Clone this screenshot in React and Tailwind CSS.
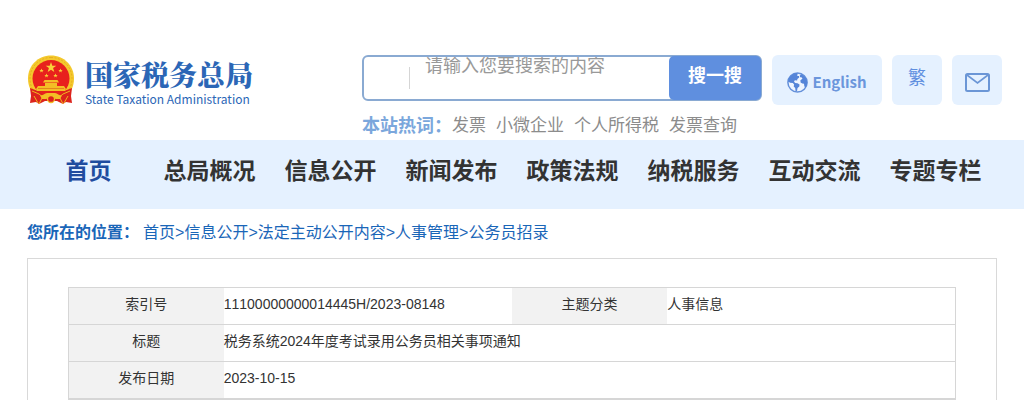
const navItems = [
  "首页",
  "总局概况",
  "信息公开",
  "新闻发布",
  "政策法规",
  "纳税服务",
  "互动交流",
  "专题专栏",
];

const hotWords = ["发票", "小微企业", "个人所得税", "发票查询"];

const crumbs = ["首页", "信息公开", "法定主动公开内容", "人事管理", "公务员招录"];

const Emblem = () => (
  <svg className="w-12 h-[50px]" viewBox="0 0 48 50" aria-hidden="true">
    {/* wheat ring */}
    <path
      d="M24 0.5C11 0.5 1 10.500 1 23.500c0 8 3.400 14 7.500 18h31C43.600 37.500 47 31.500 47 23.500 47 10.500 37 0.500 24 0.500Z"
      fill="#f4c92c"
    />
    <path
      d="M24 2.500C12 2.500 3 12 3 23.500c0 7 3 12.500 6 16M24 2.500c12 0 21 9.500 21 21 0 7-3 12.500-6 16"
      fill="none"
      stroke="#e8ad22"
      strokeWidth="1"
      strokeDasharray="2 1.500"
    />
    <circle cx="24" cy="23.500" r="18.500" fill="#e8211d" />
    {/* red drapes */}
    <path d="M3 33l8 3 6 4h14l6-4 8-3-1 8 1 7-6-1-3 2-6-3H18l-6 3-3-2-6 1 1-7Z" fill="#dc231c" />
    <path
      d="M5 36l7 3 5 4M43 36l-7 3-5 4M7 41l4 7M41 41l-4 7M15 43l-3 6M33 43l3 6"
      fill="none"
      stroke="#f0b71f"
      strokeWidth="1"
    />
    {/* stars */}
    <g fill="#f8d23a">
      <path d="M24 7l1.300 3.700h4l-3.200 2.400 1.200 3.900-3.300-2.300-3.300 2.300 1.200-3.900-3.200-2.400h4Z" />
      <path d="M14.500 13.500l.6 1.500h1.600l-1.300 1 .5 1.600-1.400-1-1.400 1 .5-1.600-1.300-1h1.600Z" />
      <path d="M33.500 13.500l.6 1.500h1.600l-1.300 1 .5 1.600-1.400-1-1.400 1 .5-1.600-1.300-1h1.600Z" />
      <path d="M19.500 18.500l.6 1.500h1.600l-1.300 1 .5 1.600-1.400-1-1.400 1 .5-1.600-1.300-1h1.600Z" />
      <path d="M28.500 18.500l.6 1.500h1.600l-1.300 1 .5 1.600-1.400-1-1.400 1 .5-1.600-1.300-1h1.600Z" />
    </g>
    {/* gate */}
    <path d="M17.500 25h13l1.500 2.500H16Z" fill="#f3bf25" />
    <path d="M18 28h12v3h7l2 3-1 2H10l-1-2 2-3h7Z" fill="#f3bf25" />
    <path d="M11 33.500h26" stroke="#e0791c" strokeWidth="0.800" />
    {/* gear */}
    <path
      d="M13 40.500c3 0 4.500-2 7-2.500h8c2.500.5 4 2.500 7 2.500l-2 3.500h-4.500a5 5 0 0 0-9 0H15Z"
      fill="#f3bf25"
    />
    <circle cx="24" cy="44" r="3.500" fill="#dc231c" stroke="#f3bf25" strokeWidth="1.300" />
  </svg>
);

const GlobeIcon = () => (
  <svg className="w-[21px] h-[21px]" viewBox="0 0 21 21" aria-hidden="true">
    <circle cx="10.500" cy="10.500" r="9.600" fill="#eef5ff" stroke="#6490da" strokeWidth="1.500" />
    <path
      d="M10.500 1C7 1 3.500 3 2 6L1 9.500l2.200 1.200 2.600.4 1.300 1.500-.4 2 1.500 1.400.4 3.200 1.500-.5.4-2.600 1.800-1.700.2-1.900-2-1.200-2.200-.4-1.300-1.200.8-1.400 2.300.3.300-1.600 1.800-1.600-.2-1.300-1.800-.2.300-1Z"
      fill="#5585d8"
    />
    <path
      d="M14 2.200l-1.300 1.600.5 1.500 1.700.2.500 1.200-2 1.500.2 2.300 1.800 1.100 1.600.1.300 2.300.9 1.800c1.300-1.500 2-3.300 2-5.300 0-3.600-2.400-6.900-6.200-8.300Z"
      fill="#5585d8"
    />
  </svg>
);

const MailIcon = () => (
  <svg className="w-[25px] h-[19px]" viewBox="0 0 25 19" aria-hidden="true">
    <rect x="1" y="1" width="23" height="17" rx="1.500" fill="none" stroke="#6b96d6" strokeWidth="2" />
    <path d="M2 2l10.500 8L23 2" fill="none" stroke="#6b96d6" strokeWidth="1.600" />
  </svg>
);

const Header = () => (
  <header className="flex items-start justify-between pt-[55px] pl-[27px] pr-[22px] pb-0.5">
    <a href="#" className="flex items-start gap-2.5 text-[#2b66b6]">
      <Emblem />
      <span className="flex flex-col whitespace-nowrap">
        <span className="text-[28px] leading-[38px] font-black font-['Noto_Serif_CJK_SC','Noto_Sans_CJK_SC',serif]">
          国家税务总局
        </span>
        <span className="text-xs leading-3 font-['Noto_Sans_CJK_SC',sans-serif]">
          State Taxation Administration
        </span>
      </span>
    </a>

    <div className="flex items-start gap-2.5">
      <div className="w-[400px]">
        <form className="flex h-[46px] rounded-md border-2 border-[#8aaad2] bg-white">
          <div className="flex flex-1 items-start">
            <span className="ml-[45px] mt-2.5 h-[22px] w-px bg-[#d5d5d5]"></span>
            <input
              type="text"
              aria-label="搜索"
              placeholder="请输入您要搜索的内容"
              className="ml-[15px] h-[18px] w-[244px] text-lg leading-[18px] outline-none placeholder:text-[#999]"
            />
          </div>
          <button
            type="button"
            className="-my-px -mr-px w-[92px] pb-1 rounded-[5px] bg-[#5f8fdf] text-lg font-bold text-white"
          >
            搜一搜
          </button>
        </form>
        <div className="mt-[13px] flex items-center gap-2.5 text-[17px] leading-6 text-[#8c8c8c] whitespace-nowrap">
          <span className="-mr-2.5 text-lg leading-6 font-bold text-[#7ba7dc]">本站热词：</span>
          {hotWords.map((word) => (
            <a key={word} href="#">
              {word}
            </a>
          ))}
        </div>
      </div>
      <button
        type="button"
        className="flex h-[50px] w-[110px] items-center justify-center gap-1 rounded-md bg-[#e5f1ff] pt-1 text-[15px] leading-5 font-bold text-[#6b96dc]"
      >
        <GlobeIcon />
        <span className="font-['Noto_Sans_CJK_SC',sans-serif]">English</span>
      </button>
      <button
        type="button"
        className="h-[50px] w-[50px] rounded-md bg-[#e5f1ff] pb-1 text-lg text-[#5f8fdf]"
      >
        繁
      </button>
      <button
        type="button"
        aria-label="邮箱"
        className="flex h-[50px] w-[50px] items-center justify-center rounded-md bg-[#e5f1ff] pt-1"
      >
        <MailIcon />
      </button>
    </div>
  </header>
);

const Nav = () => (
  <nav className="flex h-[69px] bg-[#e5f1ff] px-7 pt-3 text-[23px] leading-[38px] font-bold text-[#333]">
    {navItems.map((item, i) => (
      <a
        key={item}
        href="#"
        className={`flex-1 text-center whitespace-nowrap ${i === 0 ? "text-[#1f4c9f]" : ""}`}
      >
        {item}
      </a>
    ))}
  </nav>
);

const Breadcrumb = () => (
  <div className="flex px-[27px] pt-3 pb-[13px] text-base leading-6 text-[#1a66b8]">
    <span className="mr-1 font-bold">您所在的位置：</span>
    <div>
      {crumbs.map((crumb, i) => (
        <span key={crumb}>
          {i > 0 && ">"}
          <a href="#">{crumb}</a>
        </span>
      ))}
    </div>
  </div>
);

const InfoTable = () => {
  const label = "bg-[#f2f2f2] font-normal pb-1";

  return (
    <table className="w-full table-fixed border-collapse border border-b-2 border-[#d6d6d6] text-sm text-[#333] [font-kerning:none]">
      <colgroup>
        <col className="w-[17.5%]" />
        <col className="w-[32.5%]" />
        <col className="w-[17.5%]" />
        <col className="w-[32.5%]" />
      </colgroup>
      <tbody>
        <tr className="h-[37px] border-b border-[#d6d6d6]">
          <th scope="row" className={label}>索引号</th>
          <td className="pb-1">11100000000014445H/2023-08148</td>
          <th scope="row" className={label}>主题分类</th>
          <td className="pb-1">人事信息</td>
        </tr>
        <tr className="h-[37px] border-b border-[#d6d6d6]">
          <th scope="row" className={label}>标题</th>
          <td colSpan={3} className="pb-1">税务系统2024年度考试录用公务员相关事项通知</td>
        </tr>
        <tr className="h-[37px]">
          <th scope="row" className={label}>发布日期</th>
          <td colSpan={3} className="pb-1">2023-10-15</td>
        </tr>
      </tbody>
    </table>
  );
};

const App = () => {
  return (
    <div className="flex min-h-screen flex-col bg-white font-['Liberation_Sans','Noto_Sans_CJK_SC',sans-serif]">
      <Header />
      <Nav />
      <Breadcrumb />
      <main className="mx-[27px] flex-1 border border-b-0 border-[#d9d9d9] px-10 pt-7">
        <InfoTable />
      </main>
    </div>
  );
};

export default App;
